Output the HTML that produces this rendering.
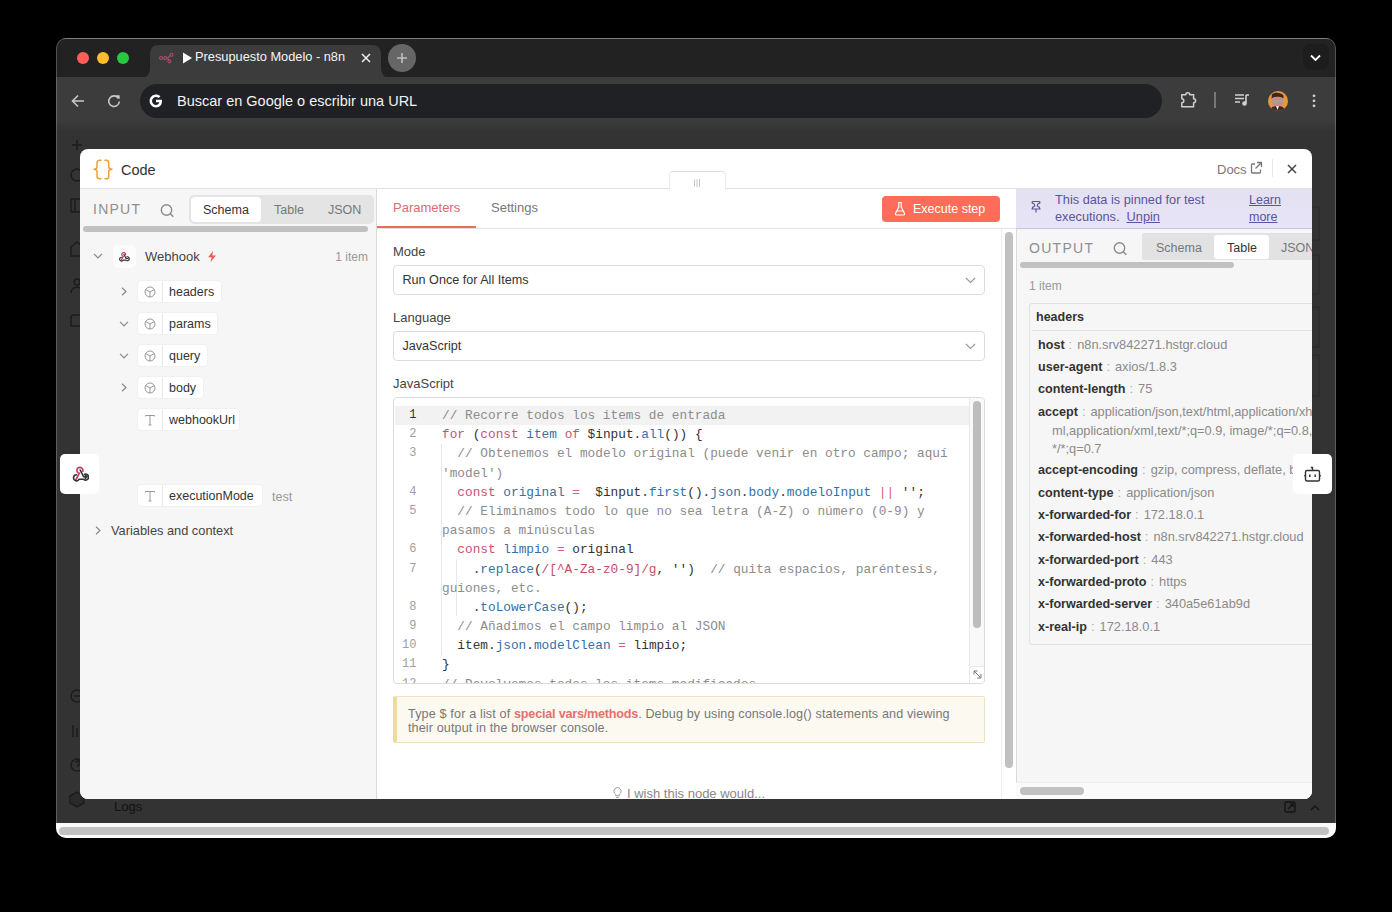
<!DOCTYPE html>
<html><head><meta charset="utf-8">
<style>
*{box-sizing:border-box;margin:0;padding:0}
html,body{width:1392px;height:912px;overflow:hidden;background:#000;font-family:"Liberation Sans",sans-serif}
.abs{position:absolute}
#win{position:absolute;left:56px;top:38px;width:1280px;height:800px;border-radius:10px;overflow:hidden;background:#333;}
#tabstrip{position:absolute;left:0;top:0;width:1280px;height:39px;background:#222;border-top:1px solid #5a5a5a}
#toolbar{position:absolute;left:0;top:39px;width:1280px;height:45px;background:#3c3c3c}
#page{position:absolute;left:0;top:84px;width:1280px;height:701px;background:linear-gradient(#3a3a3a,#333 10px)}
#hscroll{position:absolute;left:0;top:785px;width:1280px;height:15px;background:#fafafa}
#modal{position:absolute;left:80px;top:149px;width:1232px;height:650px;border-radius:8px;overflow:hidden;background:#fff}
.txt{position:absolute;white-space:nowrap;line-height:1}
.sel{position:absolute;left:313px;width:592px;height:30px;border:1px solid #dcdcdc;border-radius:4px;background:#fff}
.gut{position:absolute;left:0;width:22.5px;text-align:right;font-family:"Liberation Mono",monospace;font-size:12px;line-height:19.2px;color:#a0a0a0}
.gut div{height:19.2px}
.code{position:absolute;left:48px;font-family:"Liberation Mono",monospace;font-size:12.77px;line-height:19.2px;color:#333}
.code div{white-space:pre;height:19.2px}
.cm{color:#8c8c8c}.kw{color:#c94f77}.vr{color:#3370a8}.op{color:#d85a85}.st{color:#333}.rx{color:#c0506a}
.kv{position:absolute;left:958px;font-size:12.8px;line-height:1;color:#8a8a8a;white-space:nowrap}
.kv i{font-style:normal;color:#aaa;margin:0 5px 0 4px}
.kv b{color:#333;font-size:12.6px}
.pill{position:absolute;left:58px;height:21px;background:#fff;border-radius:4px;box-shadow:0 0 0 1px #f0f0f0}
.pic{position:absolute;left:0;top:0;width:25px;height:21px;border-right:1px solid #e8e8e8;display:flex;align-items:center;justify-content:center}
.pt{position:absolute;left:31px;top:4.5px;font-size:12.5px;line-height:1;color:#333;white-space:nowrap}
</style></head><body>
<div id="win">
  <div id="tabstrip">
    <div class="abs" style="left:21px;top:13px;width:12px;height:12px;border-radius:50%;background:#ff5f57"></div>
    <div class="abs" style="left:41px;top:13px;width:12px;height:12px;border-radius:50%;background:#febc2e"></div>
    <div class="abs" style="left:61px;top:13px;width:12px;height:12px;border-radius:50%;background:#28c840"></div>
    <!-- active tab -->
    <svg class="abs" style="left:84px;top:6px" width="252" height="33" viewBox="0 0 252 33">
      <path d="M0 33 Q10 33 10 23 L10 9 Q10 0 19 0 L232 0 Q241 0 241 9 L241 23 Q241 33 251 33 Z" fill="#3c3c3c"/>
    </svg>
    <svg class="abs" style="left:103px;top:13px" width="15" height="12" viewBox="0 0 18 14">
      <g fill="none" stroke="#b04a6a" stroke-width="1.3"><circle cx="2.5" cy="7" r="1.8"/><circle cx="7.5" cy="7" r="1.8"/><circle cx="15" cy="3" r="1.8"/><circle cx="12.5" cy="11" r="1.8"/><path d="M4.3 7h1.4M9.3 7h1.2l3-3M10.5 7l1 3"/></g>
    </svg>
    <svg class="abs" style="left:126px;top:13px" width="11" height="12" viewBox="0 0 11 12"><path d="M1 0.5 L10 6 L1 11.5Z" fill="#fff"/></svg>
    <div class="txt" style="left:139px;top:11.5px;font-size:12.8px;color:#f4f4f4">Presupuesto Modelo - n8n</div>
    <svg class="abs" style="left:305px;top:14px" width="10" height="10" viewBox="0 0 10 10"><path d="M1 1L9 9M9 1L1 9" stroke="#f0f0f0" stroke-width="1.5"/></svg>
    <div class="abs" style="left:332px;top:5px;width:28px;height:28px;border-radius:50%;background:#666"></div>
    <svg class="abs" style="left:340px;top:13px" width="12" height="12" viewBox="0 0 12 12"><path d="M6 1V11M1 6H11" stroke="#c0c0c0" stroke-width="1.6"/></svg>
    <div class="abs" style="left:1247px;top:5px;width:26px;height:26px;border-radius:7px;background:#1d1d1d"></div>
    <svg class="abs" style="left:1254px;top:15px" width="11" height="8" viewBox="0 0 11 8"><path d="M1 1.5L5.5 6L10 1.5" stroke="#fff" stroke-width="1.8" fill="none"/></svg>
  </div>
  <div id="toolbar">
    <svg class="abs" style="left:15px;top:17px" width="14" height="14" viewBox="0 0 14 14"><path d="M13 7H2M7 1.5L1.5 7L7 12.5" stroke="#c8c8c8" stroke-width="1.6" fill="none"/></svg>
    <svg class="abs" style="left:51px;top:17px" width="14" height="14" viewBox="0 0 14 14"><path d="M11.6 4.5A5.3 5.3 0 1 0 12.3 7.5" stroke="#c8c8c8" stroke-width="1.6" fill="none"/><path d="M8.5 1.2L12.6 1.2L12.6 5.3Z" fill="#c8c8c8"/></svg>
    <div class="abs" style="left:84px;top:7px;width:1022px;height:34px;border-radius:17px;background:#202124"></div>
    <svg class="abs" style="left:93px;top:17px" width="14" height="14" viewBox="0 0 14 14"><path d="M12.8 5.8H7V8.2H10.3C9.9 9.9 8.6 11 7 11C4.8 11 3 9.2 3 7S4.8 3 7 3C8 3 8.9 3.4 9.6 4L11.4 2.3C10.2 1.2 8.7 0.6 7 0.6C3.5 0.6 0.6 3.5 0.6 7S3.5 13.4 7 13.4C10.5 13.4 13 11 13 7.2C13 6.7 12.9 6.2 12.8 5.8Z" fill="#fff"/></svg>
    <div class="txt" style="left:121px;top:17px;font-size:14.5px;color:#f2f2f2">Buscar en Google o escribir una URL</div>
    <svg class="abs" style="left:1124px;top:14px" width="18" height="18" viewBox="0 0 18 18"><path d="M1.8 3.8H5.8A2 2 0 0 1 9.8 3.8H13.6V7.7A2 2 0 0 1 13.6 11.7V15.8H1.8V11.7A2 2 0 0 0 1.8 7.7Z" stroke="#d0d0d0" stroke-width="1.5" fill="none" stroke-linejoin="round"/></svg>
    <div class="abs" style="left:1158px;top:15px;width:1.5px;height:16px;background:#777"></div>
    <svg class="abs" style="left:1178px;top:16px" width="16" height="14" viewBox="0 0 16 14"><path d="M1 2H10M1 5.5H10M1 9H6" stroke="#d0d0d0" stroke-width="1.6"/><path d="M12 2V10M12 2H15" stroke="#d0d0d0" stroke-width="1.6" fill="none"/><circle cx="10.5" cy="10.5" r="2.3" fill="#d0d0d0"/></svg>
    <svg class="abs" style="left:1212px;top:14px" width="20" height="20" viewBox="0 0 20 20"><defs><clipPath id="avc"><circle cx="10" cy="10" r="10"/></clipPath></defs><g clip-path="url(#avc)"><rect width="20" height="20" fill="#e9973f"/><ellipse cx="9.5" cy="10" rx="5.8" ry="7" fill="#c98a80"/><path d="M3.5 8C3.5 2.5 15.5 2.5 15.5 8L14.5 6.5C12 5 7 5 4.5 6.5Z" fill="#2a1a18"/><path d="M3.7 3.5C6 1 13 1 15.5 4.5V7C13 5 6 5 3.7 7Z" fill="#3a2522"/><rect x="4" y="9" width="11" height="2.6" rx="1" fill="#9aa4a0" opacity="0.85"/><path d="M2 20C3 15.5 6 15 9.5 15S16 15.5 17 20Z" fill="#3b2a2a"/><path d="M8 15L9.5 19L11 15Z" fill="#eee"/></g></svg>
    <svg class="abs" style="left:1256px;top:17px" width="4" height="14" viewBox="0 0 4 14"><circle cx="2" cy="1.8" r="1.4" fill="#d0d0d0"/><circle cx="2" cy="6.8" r="1.4" fill="#d0d0d0"/><circle cx="2" cy="11.8" r="1.4" fill="#d0d0d0"/></svg>
  </div>
    <div id="page">
    <svg class="abs" style="left:0;top:0" width="1280" height="701" viewBox="0 0 1280 701">
      <g fill="none" stroke="#1c1c1c" stroke-width="1.5">
        <path d="M21 18V28M16 23H26"/>
        <circle cx="21" cy="53" r="6"/>
        <rect x="15" y="77" width="12" height="13" rx="1"/><path d="M19 77V90"/>
        <path d="M15 134V125L21 120L27 125V134Z"/>
        <circle cx="21" cy="160" r="3"/><path d="M15 171A6 6 0 0 1 27 171"/>
        <path d="M15 204V196A3 3 0 0 1 18 193H27V204Z"/>
        <circle cx="21" cy="574" r="6"/><path d="M18 574H24"/>
        <path d="M17 603V615M21 606V615M25 603V615"/>
        <circle cx="21" cy="643" r="6"/><path d="M20 641A2 2 0 1 1 22 643V645"/>
      </g>
      <g stroke="#1c1c1c" stroke-width="1.5" fill="#2a2a2a">
        <path d="M14 674L21 670L28 674V681L21 685L14 681Z"/>
      </g>
      <g fill="none" stroke="#2b2b2b" stroke-width="1">
        <path d="M1256 85H1263V118H1256"/>
        <path d="M1256 133H1263V172H1256"/>
        <path d="M1256 185H1263V225H1256"/>
        <path d="M1256 233H1263V274H1256"/>
      </g>
      <g fill="none" stroke="#141414" stroke-width="1.4">
        <rect x="1229" y="680" width="10" height="10" rx="1.5"/><path d="M1232 687L1237 682M1234 682H1237V685"/>
        <path d="M1255 688L1259 684L1263 688"/>
      </g>
    </svg>
    <div class="txt" style="left:58px;top:678px;font-size:13px;color:#121212">Logs</div>
  </div>
  <div id="hscroll"><div class="abs" style="left:3px;top:4px;width:1270px;height:8px;border-radius:4px;background:#c2c2c2"></div></div>
  <div class="abs" style="left:0;top:0;width:1280px;height:800px;border:1px solid rgba(255,255,255,0.22);border-radius:10px;pointer-events:none"></div>
</div>

<div id="modal">
  <!-- header -->
  <svg class="abs" style="left:13px;top:9.5px" width="20" height="21" viewBox="0 0 20 21"><g fill="none" stroke="#eea03c" stroke-width="1.5" stroke-linecap="round" stroke-linejoin="round"><path d="M8 1.2H6.5A2.5 2.5 0 0 0 4 3.7V8Q4 10 1 10.2Q4 10.5 4 12.5V17.3A2.5 2.5 0 0 0 6.5 19.8H8"/><path d="M12 1.2H13.3A2.4 2.4 0 0 1 15.7 3.6V8Q15.7 10 19 10.2Q15.7 10.5 15.7 12.5V17.4A2.4 2.4 0 0 1 13.3 19.8H12"/></g></svg>
  <div class="txt" style="left:41px;top:14px;font-size:14.5px;color:#333">Code</div>
  <div class="txt" style="left:1137px;top:14px;font-size:13px;color:#777">Docs</div>
  <svg class="abs" style="left:1169px;top:12px" width="14" height="14" viewBox="0 0 14 14"><g fill="none" stroke="#777" stroke-width="1.3" stroke-linejoin="round"><path d="M6 3H3.5A1 1 0 0 0 2.5 4V11A1 1 0 0 0 3.5 12H10.5A1 1 0 0 0 11.5 11V8.5"/><path d="M8 1.5H12.5V6M12.5 1.5L6.5 7.5"/></g></svg>
  <div class="abs" style="left:1192px;top:9.5px;width:1px;height:18.5px;background:#e8e8e8"></div>
  <svg class="abs" style="left:1207px;top:15px" width="10" height="10" viewBox="0 0 10 10"><path d="M1 1L9 9M9 1L1 9" stroke="#444" stroke-width="1.5"/></svg>
  <!-- drag handle -->
  <div class="abs" style="left:589px;top:22px;width:57px;height:18px;border:1px solid #ececec;border-top-color:#dedede;border-bottom:none;border-radius:4px 4px 0 0;background:#fff"></div>
  <svg class="abs" style="left:613px;top:30px" width="8" height="8" viewBox="0 0 8 8"><path d="M1.5 0.5V7.5M4 0V8M6.5 0V8" stroke="#b5b5b5" stroke-width="0.8"/></svg>
  <div class="abs" style="left:0;top:39px;width:1232px;height:1px;background:#e0e0e0"></div>
  <div class="abs" style="left:590px;top:39px;width:55px;height:1px;background:#fff"></div>

  <!-- LEFT PANEL -->
  <div class="abs" style="left:0;top:40px;width:297px;height:610px;background:#f6f6f6;border-right:1px solid #dadada">
  </div>
  <div class="txt" style="left:13px;top:53px;font-size:14px;color:#8f8f8f;letter-spacing:1.25px">INPUT</div>
  <svg class="abs" style="left:80px;top:55px" width="15" height="14" viewBox="0 0 15 14"><circle cx="6.5" cy="6" r="5.2" fill="none" stroke="#8a8a8a" stroke-width="1.4"/><path d="M10.3 9.8L13.3 12.8" stroke="#8a8a8a" stroke-width="1.4"/></svg>
  <div class="abs" style="left:109px;top:46px;width:185px;height:29px;background:#e4e4e4;border-radius:5px"></div>
  <div class="abs" style="left:111px;top:48px;width:70px;height:25px;background:#fff;border-radius:4px"></div>
  <div class="txt" style="left:123px;top:55px;font-size:12.5px;color:#333">Schema</div>
  <div class="txt" style="left:194px;top:55px;font-size:12.5px;color:#777">Table</div>
  <div class="txt" style="left:248px;top:55px;font-size:12.5px;color:#777">JSON</div>
  <div class="abs" style="left:3px;top:77px;width:285px;height:6px;background:#c1c1c1;border-radius:3px"></div>

  <!-- webhook row -->
  <svg class="abs" style="left:13px;top:104px" width="10" height="6" viewBox="0 0 10 6"><path d="M1 0.8L5 4.8L9 0.8" fill="none" stroke="#8a8a8a" stroke-width="1.2"/></svg>
  <div class="abs" style="left:33px;top:96px;width:23px;height:23px;background:#fcfcfc;border-radius:5px"></div>
  <svg class="abs" style="left:38px;top:102px" width="11.5" height="11.5" viewBox="0 0 18 18"><g fill="none" stroke-width="1.8" stroke-linecap="round">
<path d="M5 14.5L8.3 8.3A3 3 0 1 1 11.8 6.2" stroke="#c8335f"/>
<path d="M9.2 5L12.6 11.8H16" stroke="#333"/>
<path d="M5.5 9.8A3 3 0 1 0 8.2 14.2H12.5A3 3 0 1 0 13.5 9.3" stroke="#333"/>
</g></svg>
  <div class="txt" style="left:65px;top:101px;font-size:13px;color:#444">Webhook</div>
  <svg class="abs" style="left:127px;top:102px" width="10" height="11" viewBox="0 0 10 11"><path d="M6 0L1 6.2H4.6L3.5 11L9 4.6H5.4Z" fill="#ea5f55"/></svg>
  <div class="txt" style="left:238px;top:102px;font-size:12px;color:#999;width:50px;text-align:right">1 item</div>

  <!-- schema items -->
  <svg class="abs" style="left:41px;top:138px" width="6" height="9" viewBox="0 0 6 9"><path d="M1 0.8L5 4.5L1 8.2" fill="none" stroke="#8a8a8a" stroke-width="1.2"/></svg>
  <div class="pill" style="top:132px;width:83px"><div class="pic"><svg width="12" height="12" viewBox="0 0 12 12"><g fill="none" stroke="#999" stroke-width="1"><circle cx="6" cy="6" r="5"/><path d="M6 6V11M6 6L1.8 3.5M6 6L10.2 3.5"/></g></svg></div><div class="pt">headers</div></div>

  <svg class="abs" style="left:39px;top:172px" width="10" height="6" viewBox="0 0 10 6"><path d="M1 0.8L5 4.8L9 0.8" fill="none" stroke="#8a8a8a" stroke-width="1.2"/></svg>
  <div class="pill" style="top:164px;width:79px"><div class="pic"><svg width="12" height="12" viewBox="0 0 12 12"><g fill="none" stroke="#999" stroke-width="1"><circle cx="6" cy="6" r="5"/><path d="M6 6V11M6 6L1.8 3.5M6 6L10.2 3.5"/></g></svg></div><div class="pt">params</div></div>

  <svg class="abs" style="left:39px;top:204px" width="10" height="6" viewBox="0 0 10 6"><path d="M1 0.8L5 4.8L9 0.8" fill="none" stroke="#8a8a8a" stroke-width="1.2"/></svg>
  <div class="pill" style="top:196px;width:69px"><div class="pic"><svg width="12" height="12" viewBox="0 0 12 12"><g fill="none" stroke="#999" stroke-width="1"><circle cx="6" cy="6" r="5"/><path d="M6 6V11M6 6L1.8 3.5M6 6L10.2 3.5"/></g></svg></div><div class="pt">query</div></div>

  <svg class="abs" style="left:41px;top:234px" width="6" height="9" viewBox="0 0 6 9"><path d="M1 0.8L5 4.5L1 8.2" fill="none" stroke="#8a8a8a" stroke-width="1.2"/></svg>
  <div class="pill" style="top:228px;width:65px"><div class="pic"><svg width="12" height="12" viewBox="0 0 12 12"><g fill="none" stroke="#999" stroke-width="1"><circle cx="6" cy="6" r="5"/><path d="M6 6V11M6 6L1.8 3.5M6 6L10.2 3.5"/></g></svg></div><div class="pt">body</div></div>

  <div class="pill" style="top:260px;width:101px"><div class="pic"><svg width="12" height="12" viewBox="0 0 12 12"><path d="M1.5 2.5V1.5H10.5V2.5M6 1.5V11M4.5 11H7.5" fill="none" stroke="#999" stroke-width="1"/></svg></div><div class="pt">webhookUrl</div></div>

  <div class="pill" style="top:336px;width:124px"><div class="pic"><svg width="12" height="12" viewBox="0 0 12 12"><path d="M1.5 2.5V1.5H10.5V2.5M6 1.5V11M4.5 11H7.5" fill="none" stroke="#999" stroke-width="1"/></svg></div><div class="pt">executionMode</div></div>
  <div class="txt" style="left:192px;top:342px;font-size:12.5px;color:#999">test</div>

  <svg class="abs" style="left:15px;top:377px" width="6" height="9" viewBox="0 0 6 9"><path d="M1 0.8L5 4.5L1 8.2" fill="none" stroke="#8a8a8a" stroke-width="1.2"/></svg>
  <div class="txt" style="left:31px;top:375.5px;font-size:12.8px;color:#444">Variables and context</div>
  <!-- MIDDLE PANEL (local x offset 296) -->
  <div class="txt" style="left:313px;top:52px;font-size:13px;color:#dc6a6e">Parameters</div>
  <div class="txt" style="left:411px;top:52px;font-size:13px;color:#777">Settings</div>
  <div class="abs" style="left:297px;top:79px;width:639px;height:1px;background:#e2e2e2"></div>
  <div class="abs" style="left:297px;top:77px;width:99px;height:2px;background:#e2705f"></div>
  <div class="abs" style="left:802px;top:47px;width:118px;height:26px;background:#ff6d5a;border-radius:4px"></div>
  <svg class="abs" style="left:814px;top:52px" width="12" height="15" viewBox="0 0 12 15"><path d="M4.2 1.5H7.8M4.8 1.5V6L1.5 12.5A1 1 0 0 0 2.4 14H9.6A1 1 0 0 0 10.5 12.5L7.2 6V1.5M3 10H9" fill="none" stroke="#fff" stroke-width="1.2" stroke-linejoin="round"/></svg>
  <div class="txt" style="left:833px;top:54px;font-size:12.5px;color:#fff">Execute step</div>

  <div class="txt" style="left:313px;top:96px;font-size:13px;color:#444">Mode</div>
  <div class="sel" style="top:116px"><div class="txt" style="left:8.5px;top:7.5px;font-size:12.6px;color:#333">Run Once for All Items</div><svg class="abs" style="left:571px;top:11px" width="11" height="7" viewBox="0 0 11 7"><path d="M1 1L5.5 5.5L10 1" fill="none" stroke="#999" stroke-width="1.2"/></svg></div>
  <div class="txt" style="left:313px;top:162px;font-size:13px;color:#444">Language</div>
  <div class="sel" style="top:182px"><div class="txt" style="left:8.5px;top:7.5px;font-size:12.6px;color:#333">JavaScript</div><svg class="abs" style="left:571px;top:11px" width="11" height="7" viewBox="0 0 11 7"><path d="M1 1L5.5 5.5L10 1" fill="none" stroke="#999" stroke-width="1.2"/></svg></div>
  <div class="txt" style="left:313px;top:228px;font-size:13px;color:#444">JavaScript</div>

  <!-- code editor -->
  <div class="abs" id="editor" style="left:313px;top:248px;width:592px;height:287px;border:1px solid #dcdcdc;border-radius:4px;overflow:hidden;background:#fff">
    <div class="abs" style="left:1px;top:8px;width:574px;height:19px;background:#f2f2f2"></div>
    <div class="abs" style="left:47px;top:46px;width:1px;height:211px;background:#e8e8e8"></div>
    <div class="abs" style="left:62px;top:161px;width:1px;height:57px;background:#e8e8e8"></div>
    <div class="gut" style="top:8px">
      <div style="color:#333">1</div><div>2</div><div>3</div><div>&nbsp;</div><div>4</div><div>5</div><div>&nbsp;</div><div>6</div><div>7</div><div>&nbsp;</div><div>8</div><div>9</div><div>10</div><div>11</div><div>12</div>
    </div>
    <div class="code" style="top:8px">
<div><span class="cm">// Recorre todos los items de entrada</span></div>
<div><span class="kw">for</span> (<span class="kw">const</span> <span class="vr">item</span> <span class="kw">of</span> $input.<span class="vr">all</span>()) {</div>
<div>  <span class="cm">// Obtenemos el modelo original (puede venir en otro campo; aquí</span></div>
<div><span class="cm">'model')</span></div>
<div>  <span class="kw">const</span> <span class="vr">original</span> <span class="op">=</span>  $input.<span class="vr">first</span>().<span class="vr">json</span>.<span class="vr">body</span>.<span class="vr">modeloInput</span> <span class="op">||</span> <span class="st">''</span>;</div>
<div>  <span class="cm">// Eliminamos todo lo que no sea letra (A-Z) o número (0-9) y</span></div>
<div><span class="cm">pasamos a minúsculas</span></div>
<div>  <span class="kw">const</span> <span class="vr">limpio</span> <span class="op">=</span> original</div>
<div>    .<span class="vr">replace</span>(<span class="rx">/[^A-Za-z0-9]/g</span>, <span class="st">''</span>)  <span class="cm">// quita espacios, paréntesis,</span></div>
<div><span class="cm">guiones, etc.</span></div>
<div>    .<span class="vr">toLowerCase</span>();</div>
<div>  <span class="cm">// Añadimos el campo limpio al JSON</span></div>
<div>  item.<span class="vr">json</span>.<span class="vr">modelClean</span> <span class="op">=</span> limpio;</div>
<div>}</div>
<div><span class="cm">// Devolvemos todos los items modificados</span></div>
    </div>
    <div class="abs" style="left:575px;top:0;width:16px;height:268px;background:#f9f9f9;border-left:1px solid #e8e8e8"></div><div class="abs" style="left:575px;top:268px;width:16px;height:18px;background:#fff;border-left:1px solid #e8e8e8;border-top:1px solid #e8e8e8;border-radius:3px 0 0 0"></div>
    <div class="abs" style="left:579px;top:3px;width:8px;height:227px;background:#bdbdbd;border-radius:4px"></div>
    <svg class="abs" style="left:578px;top:271px" width="11" height="11" viewBox="0 0 11 11"><path d="M2 2H5.5M2 2V5.5M2 2L8 8M5 9H9V5" fill="none" stroke="#777" stroke-width="1"/></svg>
  </div>

  <!-- hint -->
  <div class="abs" style="left:313px;top:547px;width:592px;height:47px;background:#fcf9f1;border:1px solid #ece3c0;border-left:4px solid #efdc9c;border-radius:2px"></div>
  <div class="abs" style="left:328px;top:557.5px;font-size:12.6px;line-height:14.6px;color:#777;width:580px"><span style="letter-spacing:0.15px">Type $ for a list of </span><b style="color:#e07272;letter-spacing:-0.2px">special vars/methods</b><span style="letter-spacing:0.12px">. Debug by using console.log() statements and viewing<br>their output in the browser console.</span></div>
  <svg class="abs" style="left:533px;top:638px" width="9" height="12" viewBox="0 0 10 13"><path d="M3 9.5V8A4 4 0 1 1 7 8V9.5ZM3.5 11.5H6.5" fill="none" stroke="#999" stroke-width="1.1"/></svg>
  <div class="txt" style="left:547px;top:638px;font-size:13px;color:#888">I wish this node would...</div>

  <!-- middle panel scrollbar -->
  <div class="abs" style="left:921px;top:80px;width:15px;height:570px;background:#fff;border-left:1px solid #eee"></div>
  <div class="abs" style="left:925px;top:83px;width:8px;height:536px;background:#c1c1c1;border-radius:4px"></div>

  <!-- RIGHT PANEL (local x offset 936) -->
  <div class="abs" style="left:936px;top:40px;width:296px;height:610px;background:#f6f6f6;border-left:1px solid #dadada"></div>
  <div class="abs" style="left:936px;top:40px;width:296px;height:40px;background:linear-gradient(#e3e1f1,#e6e4f6);border-bottom:1px solid #c9c5dc"></div>
  <svg class="abs" style="left:950px;top:51px" width="12" height="14" viewBox="0 0 12 14"><path d="M3 1.5H9A0.9 0.9 0 0 1 9 3.3Q7.3 4 7.3 6Q10 7.2 10 9H2Q2 7.2 4.7 6Q4.7 4 3 3.3A0.9 0.9 0 0 1 3 1.5ZM6 9V12.5" fill="none" stroke="#5a54a0" stroke-width="1.2" stroke-linejoin="round"/></svg>
  <div class="abs" style="left:975px;top:43px;font-size:12.75px;line-height:16.5px;color:#5a549e;width:165px">This data is pinned for test executions. &nbsp;<u>Unpin</u></div>
  <div class="abs" style="left:1169px;top:43px;font-size:12.5px;line-height:17px;color:#5a549e;width:40px"><u>Learn</u><br><u>more</u></div>

  <div class="txt" style="left:949px;top:92px;font-size:14px;color:#8f8f8f;letter-spacing:1.3px">OUTPUT</div>
  <svg class="abs" style="left:1033px;top:93px" width="15" height="14" viewBox="0 0 15 14"><circle cx="6.5" cy="6" r="5.2" fill="none" stroke="#8a8a8a" stroke-width="1.4"/><path d="M10.3 9.8L13.3 12.8" stroke="#8a8a8a" stroke-width="1.4"/></svg>
  <div class="abs" style="left:1062px;top:84px;width:170px;height:27px;background:#e2e2e2;border-radius:2px 0 0 2px"></div>
  <div class="abs" style="left:1134px;top:86px;width:55px;height:24px;background:#fff;border-radius:3px"></div>
  <div class="txt" style="left:1076px;top:93px;font-size:12.5px;color:#777">Schema</div>
  <div class="txt" style="left:1147px;top:93px;font-size:12.5px;color:#333">Table</div>
  <div class="txt" style="left:1201px;top:93px;font-size:12.5px;color:#777">JSON</div>
  <div class="abs" style="left:940px;top:113px;width:214px;height:6px;background:#c1c1c1;border-radius:3px"></div>
  <div class="txt" style="left:949px;top:131px;font-size:12px;color:#999">1 item</div>

  <!-- table card -->
  <div class="abs" style="left:949px;top:154px;width:300px;height:342px;border:1px solid #e0e0e0;border-radius:3px;background:#f6f6f6"></div>
  <div class="abs" style="left:952px;top:181px;width:290px;height:1px;background:#e0e0e0"></div>
  <div class="txt" style="left:956px;top:162px;font-size:12.5px;font-weight:bold;color:#333">headers</div>
  <div class="kv" style="top:190px"><b>host</b><i>:</i>n8n.srv842271.hstgr.cloud</div>
  <div class="kv" style="top:212px"><b>user-agent</b><i>:</i>axios/1.8.3</div>
  <div class="kv" style="top:234px"><b>content-length</b><i>:</i>75</div>
  <div class="kv" style="top:257px"><b>accept</b><i>:</i>application/json,text/html,application/xhtml+</div>
  <div class="kv" style="top:276px;left:972px">ml,application/xml,text/*;q=0.9, image/*;q=0.8,</div>
  <div class="kv" style="top:294px;left:972px">*/*;q=0.7</div>
  <div class="kv" style="top:315px"><b>accept-encoding</b><i>:</i>gzip, compress, deflate, br</div>
  <div class="kv" style="top:338px"><b>content-type</b><i>:</i>application/json</div>
  <div class="kv" style="top:360px"><b>x-forwarded-for</b><i>:</i>172.18.0.1</div>
  <div class="kv" style="top:382px"><b>x-forwarded-host</b><i>:</i>n8n.srv842271.hstgr.cloud</div>
  <div class="kv" style="top:405px"><b>x-forwarded-port</b><i>:</i>443</div>
  <div class="kv" style="top:427px"><b>x-forwarded-proto</b><i>:</i>https</div>
  <div class="kv" style="top:449px"><b>x-forwarded-server</b><i>:</i>340a5e61ab9d</div>
  <div class="kv" style="top:472px"><b>x-real-ip</b><i>:</i>172.18.0.1</div>

  <div class="abs" style="left:936px;top:633px;width:296px;height:17px;background:#fafafa;border-top:1px solid #eee"></div>
  <div class="abs" style="left:940px;top:638px;width:64px;height:8px;background:#c1c1c1;border-radius:4px"></div>

</div>

<div class="abs" style="left:60px;top:454px;width:39px;height:40px;background:#fff;border-radius:5px"></div>
<svg class="abs" style="left:71px;top:465px" width="18" height="18" viewBox="0 0 18 18"><g fill="none" stroke-width="1.6" stroke-linecap="round">
<path d="M5 14.5L8.3 8.3A3 3 0 1 1 11.8 6.2" stroke="#c8335f"/>
<path d="M9.2 5L12.6 11.8H16M14.3 10.2L16 11.8L14.3 13.4" stroke="#333"/>
<path d="M5.5 9.8A3 3 0 1 0 8.2 14.2H12.5A3 3 0 1 0 13.5 9.3" stroke="#333"/>
</g></svg>
<div class="abs" style="left:1293px;top:454px;width:39px;height:40px;background:#fff;border-radius:5px"></div>
<svg class="abs" style="left:1303px;top:465px" width="19" height="18" viewBox="0 0 19 18"><g fill="none" stroke="#333" stroke-width="1.4" stroke-linejoin="round">
<rect x="2.5" y="5.5" width="14" height="10.5" rx="1.5"/><path d="M9.5 5.5V2.5H7.8M1.2 10.8H2.5M16.5 10.8H17.8"/></g>
<path d="M6.8 9.5V12M12.2 9.5V12" stroke="#333" stroke-width="1.5"/></svg>
</body></html>
